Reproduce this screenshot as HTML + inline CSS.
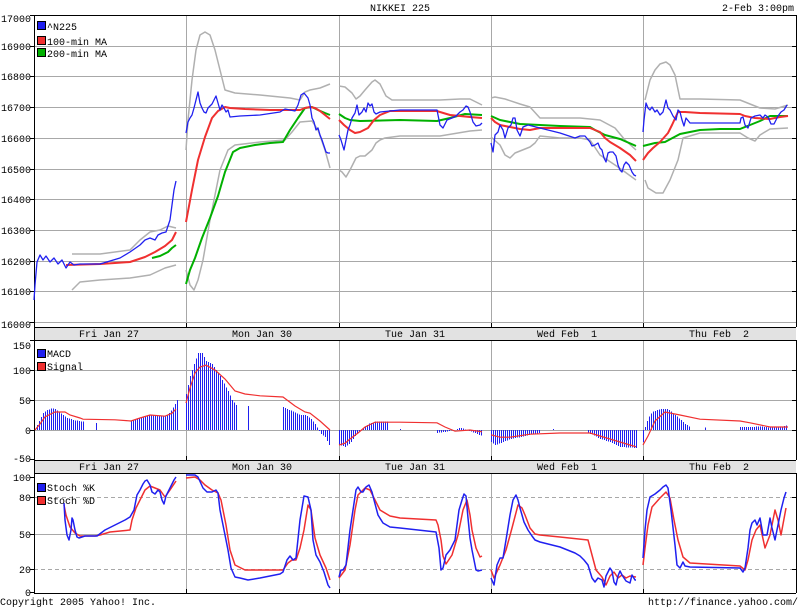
<!DOCTYPE html>
<html><head><meta charset="utf-8"><style>
html,body{margin:0;padding:0;background:#fff;width:800px;height:608px;overflow:hidden}
svg{display:block}
text{font-family:"Liberation Mono","DejaVu Sans Mono",monospace;font-size:10px;fill:#000}
</style></head><body>
<svg id="s" width="800" height="608" viewBox="0 0 800 608" xmlns="http://www.w3.org/2000/svg">
<rect width="800" height="608" fill="#fff"/>
<text x="400" y="11" text-anchor="middle">NIKKEI 225</text>
<text x="794" y="11" text-anchor="end">2-Feb 3:00pm</text>
<rect x="34" y="327" width="762" height="13" fill="#e2e2e2"/>
<rect x="34" y="460" width="762" height="13" fill="#e2e2e2"/>
<g text-anchor="middle">
<text x="109" y="337">Fri Jan 27</text><text x="262" y="337">Mon Jan 30</text><text x="415" y="337">Tue Jan 31</text><text x="567" y="337" xml:space="preserve">Wed Feb  1</text><text x="719" y="337" xml:space="preserve">Thu Feb  2</text>
<text x="109" y="470">Fri Jan 27</text><text x="262" y="470">Mon Jan 30</text><text x="415" y="470">Tue Jan 31</text><text x="567" y="470" xml:space="preserve">Wed Feb  1</text><text x="719" y="470" xml:space="preserve">Thu Feb  2</text>
</g>
<g stroke="#a8a8a8" stroke-width="1" shape-rendering="crispEdges">
<path d="M34 15.5H796M34 46.5H796M34 76.5H796M34 107.5H796M34 138.5H796M34 169.5H796M34 199.5H796M34 230.5H796M34 261.5H796M34 291.5H796M34 322.5H796"/>
<path d="M34 370.5H796M34 400.5H796M34 430.5H796"/>
<path d="M34 534.5H796"/>
<path d="M186.5 15V327M339.5 15V327M491.5 15V327M643.5 15V327M186.5 340V460M339.5 340V460M491.5 340V460M643.5 340V460M186.5 473V593M339.5 473V593M491.5 473V593M643.5 473V593"/>
</g>
<g stroke="#a8a8a8" stroke-width="1" stroke-dasharray="4,3" shape-rendering="crispEdges">
<path d="M34 497.5H796M34 569.5H796"/>
</g>
<g stroke="#000" stroke-width="1" fill="none" shape-rendering="crispEdges">
<path d="M34 15.5H796.5V327M34.5 15V593M34 327.5H796M34 340.5H796M34 460.5H796M34 473.5H796M34 593.5H796M796.5 340V460M796.5 473V593"/>
<path d="M30 15.5h4M30 46.5h4M30 76.5h4M30 107.5h4M30 138.5h4M30 169.5h4M30 199.5h4M30 230.5h4M30 261.5h4M30 291.5h4M30 322.5h4M30 340.5h4M30 370.5h4M30 400.5h4M30 430.5h4M30 459.5h4M30 477.5h4M30 497.5h4M30 534.5h4M30 569.5h4M30 592.5h4"/>
<path d="M792 46.5h4M792 76.5h4M792 107.5h4M792 138.5h4M792 169.5h4M792 199.5h4M792 230.5h4M792 261.5h4M792 291.5h4M792 370.5h4M792 400.5h4M792 430.5h4M792 497.5h4M792 534.5h4M792 569.5h4"/>
<path d="M186.5 323v4M339.5 323v4M491.5 323v4M643.5 323v4M186.5 456v4M339.5 456v4M491.5 456v4M643.5 456v4M186.5 589v4M339.5 589v4M491.5 589v4M643.5 589v4"/>
</g>
<g text-anchor="end">
<text x="31" y="22">17000</text><text x="31" y="50">16900</text><text x="31" y="80">16800</text><text x="31" y="111">16700</text><text x="31" y="142">16600</text><text x="31" y="173">16500</text><text x="31" y="203">16400</text><text x="31" y="234">16300</text><text x="31" y="265">16200</text><text x="31" y="295">16100</text><text x="31" y="328">16000</text>
<text x="31" y="349">150</text><text x="31" y="374">100</text><text x="31" y="404">50</text><text x="31" y="434">0</text><text x="31" y="462">-50</text>
<text x="31" y="481">100</text><text x="31" y="501">80</text><text x="31" y="538">50</text><text x="31" y="573">20</text><text x="31" y="596">0</text>
</g>
<text x="0" y="605">Copyright 2005 Yahoo! Inc.</text>
<text x="798" y="605" text-anchor="end">http://finance.yahoo.com/</text>

<g fill="none" stroke-linejoin="round">
<g stroke="#b0b0b0" stroke-width="1.5">
<polyline points="72,254 100,254 130,250 140,240 150,232 160,230 168,226 176,228"/>
<polyline points="72,290 80,282 100,280 130,278 150,275 165,268 176,265"/>
<polyline points="186,150 188,120 192,80 196,50 200,35 205,32 210,35 215,50 220,70 225,90 235,93 260,95 290,98 300,100 305,92 310,90 320,88 330,84"/>
<polyline points="186,270 190,285 194,290 198,280 203,260 210,220 220,170 228,150 235,145 260,142 285,140 292,132 300,122 312,121 318,130 325,150 330,168"/>
<polyline points="339,86 345,87 352,93 356,99 360,96 365,90 372,82 375,80 380,84 386,96 392,100 400,100 440,100 460,99 470,99 482,105"/>
<polyline points="339,170 342,172 346,177 350,170 356,158 360,156 365,156 372,150 376,143 380,140 385,138 400,136 440,136 470,131 482,130"/>
<polyline points="491,98 495,97 505,99 520,104 530,107 540,118 560,118 580,118 600,120 615,128 625,140 636,150"/>
<polyline points="491,137 500,145 505,155 510,158 515,153 530,147 535,143 540,136 560,138 580,138 590,140 600,155 615,165 625,172 636,180"/>
<polyline points="645,100 650,80 655,70 660,64 666,62 670,65 675,75 680,99 700,99 740,100 760,108 775,109 788,105"/>
<polyline points="645,180 648,188 656,193 663,193 670,180 678,160 683,138 700,133 740,133 748,138 755,141 760,135 770,129 788,128"/>
</g>
<g stroke="#00b000" stroke-width="2">
<polyline points="152,258 160,256 168,252 172,248 176,245"/>
<polyline points="186,284 190,270 195,258 202,238 210,218 218,196 225,172 233,152 240,148 255,145 270,143 283,142 290,130 298,118 305,108 312,107 318,110 325,113 330,115"/>
<polyline points="339,114 345,118 350,120 360,121 400,120 437,121 450,118 465,114 482,115"/>
<polyline points="491,116 500,120 510,122 520,124 560,126 590,127 595,130 605,135 620,139 636,146"/>
<polyline points="643,146 655,143 665,142 680,134 700,130 720,129 740,129 750,125 760,121 770,116 780,116 788,116"/>
</g>
<g stroke="#f03030" stroke-width="2">
<polyline points="66,265 100,264 130,262 145,257 155,252 165,246 172,240 176,232"/>
<polyline points="186,222 192,190 198,160 205,137 212,118 218,111 225,107 230,108 245,109 270,110 290,110 300,110 305,108 310,107 315,108 320,111 325,115 330,119"/>
<polyline points="339,120 344,125 350,130 355,133 360,132 368,128 374,120 380,115 390,111 400,111 437,111 440,112 450,115 470,117 482,118"/>
<polyline points="491,118 495,122 500,125 510,127 520,129 530,130 540,128 560,128 590,128 600,132 605,138 610,142 620,148 630,155 636,161"/>
<polyline points="643,160 648,153 653,148 660,142 668,133 672,125 678,112 685,112 700,113 740,114 745,116 755,118 770,119 780,117 788,116"/>
</g>
<g stroke="#2020f0" stroke-width="1.3">
<polyline points="34,300 35,285 37,262 40,255 43,260 46,256 50,262 54,258 58,264 62,260 66,268 70,262 74,265 80,264 100,264 120,258 130,252 140,245 145,240 150,238 155,240 158,235 162,233 166,232 170,220 172,205 174,190 176,181"/>
<polyline points="186,133 188,122 190,118 192,115 194,108 196,100 198,92 200,103 202,108 204,112 206,113 208,108 212,104 214,100 216,96 218,103 220,110 222,105 224,108 226,112 228,110 230,117 240,116 260,115 280,112 285,109 290,110 295,111 298,105 301,95 304,93 308,98 310,105 312,118 314,122 316,130 318,128 320,135 322,140 324,146 326,152 328,153 330,153"/>
<polyline points="339,135 341,140 344,150 346,140 348,130 350,125 352,118 355,113 357,105 359,115 362,112 364,108 366,112 368,103 370,106 372,104 374,112 376,114 380,112 400,110 437,110 440,125 443,128 447,120 452,118 456,116 460,112 463,110 466,106 468,107 470,112 473,122 476,126 480,125 482,123"/>
<polyline points="491,143 493,152 495,135 498,132 500,125 503,130 505,138 508,128 511,125 513,118 515,118 517,130 520,136 523,127 528,125 540,128 560,133 575,138 580,136 585,136 590,142 592,146 595,145 598,143 600,148 602,150 604,158 606,162 608,153 610,152 613,152 616,156 618,165 620,170 622,172 624,165 626,162 629,165 632,172 634,175 636,176"/>
<polyline points="643,132 644,120 646,103 648,108 650,110 652,107 655,112 657,110 660,115 663,112 666,100 668,108 670,110 673,116 676,120 678,110 680,112 682,120 684,126 686,118 690,123 700,123 740,123 741,118 743,117 745,125 748,128 751,118 755,116 760,115 763,118 765,115 768,117 771,124 774,124 776,120 778,116 781,112 784,110 787,105"/>
</g>
</g>
<g id="bars" stroke="#2020f0" stroke-width="1" shape-rendering="crispEdges"></g>
<g id="sig" fill="none" stroke="#f03030" stroke-width="1.2"></g>

<g fill="none" stroke-width="1.5" stroke-linejoin="round">
<g stroke="#f03030">
<polyline points="64,505 66,515 70,527 75,533 80,536 95,536 100,535 110,532 130,530 132,520 136,508 140,500 145,490 150,486 155,488 160,490 165,497 170,490 176,481"/>
<polyline points="186,478 195,477 200,480 205,485 212,490 218,493 221,500 226,525 230,550 235,565 245,570 280,570 283,570 288,563 292,560 296,560 300,548 304,530 308,505 311,510 315,538 320,555 326,568 330,580"/>
<polyline points="339,578 345,570 350,545 355,510 358,495 365,488 370,490 375,500 380,510 390,516 400,518 436,520 438,525 441,540 443,556 446,564 452,555 458,535 463,510 467,500 470,515 472,530 476,548 480,557 482,556"/>
<polyline points="491,570 494,578 500,565 506,550 512,528 518,505 522,508 525,515 530,528 535,534 540,535 560,537 588,540 592,555 596,570 602,577 606,585 610,576 614,572 618,578 622,575 626,578 630,576 636,577"/>
<polyline points="643,565 645,548 648,525 652,507 660,498 666,492 670,498 674,520 678,540 683,557 690,563 740,566 745,570 748,560 752,540 756,530 760,525 765,548 770,535 775,510 778,520 781,535 786,508"/>
</g>
<g stroke="#2020f0">
<polyline points="64,503 65,520 67,535 69,540 71,530 72,518 73,520 75,530 77,537 79,538 85,536 97,536 105,530 115,525 125,520 130,517 134,510 137,495 140,490 143,484 145,481 147,480 150,485 152,492 155,494 158,490 160,492 162,500 164,504 166,496 170,488 174,480 176,477"/>
<polyline points="186,475 195,475 198,477 203,488 207,492 212,492 216,490 218,493 220,510 224,530 228,550 231,568 235,577 240,578 248,580 260,578 280,574 283,572 287,560 290,556 293,560 296,558 300,520 304,496 308,497 311,510 313,540 316,555 320,562 324,572 328,585 330,588"/>
<polyline points="339,577 341,570 343,570 346,565 350,530 353,510 356,490 358,487 361,492 363,492 366,487 369,485 372,492 374,500 378,515 383,523 390,527 400,528 436,532 439,548 441,570 443,568 446,555 450,550 455,540 459,510 462,500 464,494 466,496 468,518 470,538 472,550 474,560 476,570 478,571 482,570"/>
<polyline points="491,578 494,585 497,565 500,558 503,558 506,540 510,515 513,500 516,495 518,500 520,508 524,522 528,530 532,536 535,540 540,542 560,547 575,553 580,556 584,560 588,565 592,578 595,582 598,578 602,580 604,587 606,576 610,568 612,571 614,582 616,585 618,576 620,571 622,575 626,581 630,583 632,575 635,580 636,580"/>
<polyline points="643,558 645,530 647,510 650,497 655,494 660,490 663,487 666,485 668,488 671,510 675,545 677,565 680,568 683,562 685,566 690,567 740,568 743,572 745,568 748,548 750,530 752,523 755,520 757,525 760,518 763,535 767,535 770,518 772,528 775,540 778,525 781,510 784,498 786,492"/>
</g>
</g>

<g stroke="#000" stroke-width="1" shape-rendering="crispEdges">
<rect x="37.5" y="21.5" width="8" height="8" fill="#2020f0"/>
<rect x="37.5" y="36.5" width="8" height="8" fill="#f03030"/>
<rect x="37.5" y="48.5" width="8" height="8" fill="#00b000"/>
<rect x="37.5" y="349.5" width="8" height="8" fill="#2020f0"/>
<rect x="37.5" y="362.5" width="8" height="8" fill="#f03030"/>
<rect x="37.5" y="483.5" width="8" height="8" fill="#2020f0"/>
<rect x="37.5" y="496.5" width="8" height="8" fill="#f03030"/>
</g>
<text x="47" y="30">^N225</text><text x="47" y="45">100-min MA</text><text x="47" y="57">200-min MA</text>
<text x="47" y="357">MACD</text><text x="47" y="370">Signal</text>
<text x="47" y="491">Stoch %K</text><text x="47" y="504">Stoch %D</text>
</svg>
<script>
(function(){
var NS="http://www.w3.org/2000/svg";
function Y(v){return 430-v*0.6;}
var segs=[
[[35,0],[37,8],[39,15],[41,22],[43,28],[47,33],[51,36],[55,35],[59,30],[63,25],[67,20],[71,18],[75,16],[83,14]],
[[96,12],[96,12]],
[[131,15],[140,20],[148,25],[160,23],[166,22],[170,30],[174,40],[177,50]],
[[186,60],[190,90],[194,110],[198,128],[202,128],[206,115],[212,110],[220,90],[228,65],[232,50],[236,42]],
[[248,40],[248,40]],
[[283,38],[290,33],[296,28],[300,25],[306,25],[310,20],[315,10],[320,-5],[325,-12],[330,-28]],
[[339,-25],[345,-28],[350,-22],[355,-10],[358,-5],[362,2],[368,10],[375,14],[387,14]],
[[400,2],[400,2]],
[[437,-5],[445,-3],[455,0],[460,4],[470,-2],[482,-10]],
[[491,-20],[495,-25],[500,-22],[510,-15],[520,-12],[530,-8],[540,-5]],
[[553,2],[553,2]],
[[588,-5],[595,-10],[600,-15],[610,-20],[620,-28],[636,-30]],
[[643,-20],[645,5],[648,20],[652,30],[660,35],[668,35],[675,25],[680,18],[685,10],[690,5]],
[[705,4],[705,4]],
[[740,5],[750,5],[760,6],[770,4],[780,4],[787,8]]];
var g=document.getElementById("bars"),d="";
segs.forEach(function(s){
 var x0=s[0][0],x1=s[s.length-1][0];
 for(var x=x0;x<=x1;x+=2){
  var v=s[0][1];
  for(var i=0;i<s.length-1;i++){if(x>=s[i][0]&&x<=s[i+1][0]){var t=(x-s[i][0])/((s[i+1][0]-s[i][0])||1);v=s[i][1]+t*(s[i+1][1]-s[i][1]);break;}}
  d+="M"+(x+0.5)+" 430V"+Y(v).toFixed(1);
 }
});
var p=document.createElementNS(NS,"path");p.setAttribute("d",d);g.appendChild(p);
var sig=[
[[35,0],[40,10],[45,22],[55,30],[65,30],[70,25],[80,20],[83,18],[115,17],[131,15],[140,20],[150,25],[165,23],[172,28],[176,35]],
[[186,45],[190,70],[195,95],[200,105],[206,108],[215,100],[225,85],[235,65],[245,60],[260,57],[283,55],[295,40],[305,30],[310,28],[320,15],[330,0]],
[[339,-25],[345,-22],[350,-15],[358,-5],[365,5],[375,13],[400,13],[437,12],[445,5],[455,-2],[470,0],[482,-3]],
[[491,-8],[500,-12],[510,-12],[530,-7],[560,-5],[590,-5],[600,-10],[620,-20],[636,-28]],
[[643,-25],[648,-10],[655,15],[665,30],[680,25],[700,18],[740,15],[750,12],[770,5],[788,5]]];
var sg=document.getElementById("sig");
sig.forEach(function(s){var pl=document.createElementNS(NS,"polyline");
 pl.setAttribute("points",s.map(function(q){return q[0]+","+Y(q[1]).toFixed(1);}).join(" "));sg.appendChild(pl);});
})();
</script>
</body></html>
